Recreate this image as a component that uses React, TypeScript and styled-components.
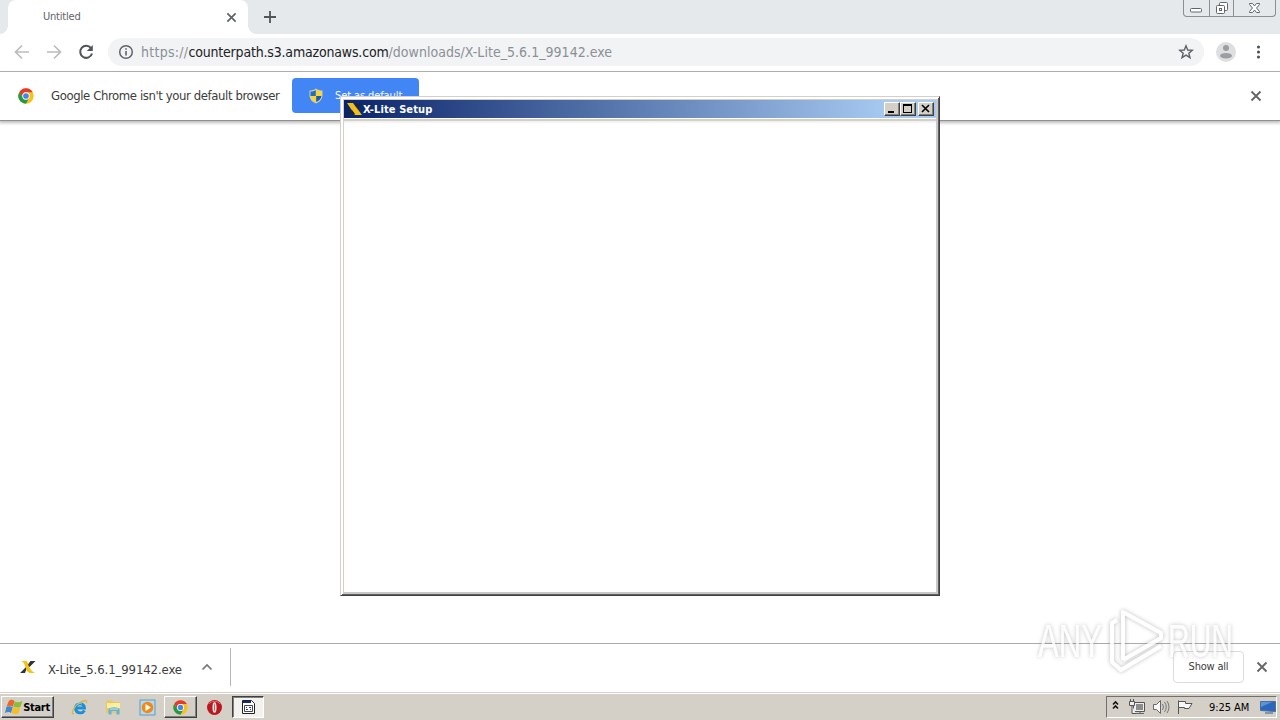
import React from "react";
import styled, { createGlobalStyle } from "styled-components";

const Global = createGlobalStyle`
  * { box-sizing: border-box; }
  body { margin: 0; overflow: hidden; background: #fff; }
  svg { display: block; flex: none; }
`;

const Desktop = styled.div`
  position: relative;
  width: 1280px;
  height: 720px;
  display: flex;
  flex-direction: column;
  overflow: hidden;
  background: #fff;
  font-family: "DejaVu Sans Condensed", "DejaVu Sans", sans-serif;
  font-stretch: condensed;
`;

const Text = styled.span<{ $size: number; $spacing?: number; $color?: string; $bold?: boolean }>`
  font-size: ${(p) => p.$size}px;
  letter-spacing: ${(p) => p.$spacing ?? 0}px;
  color: ${(p) => p.$color ?? "#3c3c3c"};
  font-weight: ${(p) => (p.$bold ? 700 : 400)};
  white-space: pre;
  line-height: 16px;
`;

const TabStrip = styled.header`
  flex: none;
  height: 34px;
  display: flex;
  padding-left: 8px;
  background: #e5e9ec;
`;

const Tab = styled.div`
  position: relative;
  width: 240px;
  height: 34px;
  display: flex;
  align-items: center;
  justify-content: space-between;
  padding: 0 11px 0 35px;
  border-radius: 8px 8px 0 0;
  background: #fff;
  &::before,
  &::after {
    content: "";
    position: absolute;
    bottom: 0;
    width: 8px;
    height: 8px;
  }
  &::before {
    left: -8px;
    background: radial-gradient(circle at 0 0, transparent 7.5px, #fff 8px);
  }
  &::after {
    right: -8px;
    background: radial-gradient(circle at 100% 0, transparent 7.5px, #fff 8px);
  }
`;

const NewTab = styled.div`
  padding: 11px 0 0 16px;
`;

const Caption = styled.div`
  margin: 0 4px 0 auto;
  display: flex;
  width: 93px;
  height: 17px;
  border: 1px solid #8b8f93;
  border-top: 0;
  border-radius: 0 0 4px 4px;
`;

const CaptionButton = styled.div<{ $w: number }>`
  width: ${(p) => p.$w}px;
  display: flex;
  justify-content: center;
  & + & { border-left: 1px solid #8b8f93; }
`;

const Toolbar = styled.div`
  flex: none;
  height: 38px;
  display: flex;
  align-items: center;
  padding: 0 14px 1px;
  border-bottom: 1px solid #a9abad;
`;

const Nav = styled.div`
  width: 94px;
  flex: none;
  display: flex;
  gap: 16px;
`;

const Address = styled.div`
  width: 1096px;
  flex: none;
  height: 28px;
  display: flex;
  align-items: center;
  padding: 0 10px;
  border-radius: 14px;
  background: #f1f3f4;
  svg:last-child { margin-left: auto; }
`;

const Url = styled.div`
  display: flex;
  margin-left: 7px;
`;

const ToolbarEnd = styled.div`
  display: flex;
  align-items: center;
  gap: 14px;
  margin-left: 11px;
`;

const InfoBar = styled.div`
  flex: none;
  height: 48px;
  display: flex;
  align-items: center;
  padding: 0 18px 0 18px;
  position: relative;
  box-shadow: 0 1px 0 #909090, 0 2px 3px 1px #bdbdbd;
  svg:last-child { margin-left: auto; }
`;

const InfoMessage = styled.div`
  width: 241px;
  margin-left: 17px;
  padding-bottom: 3px;
`;

const DefaultButton = styled.div`
  width: 127px;
  height: 35px;
  margin-bottom: 1px;
  display: flex;
  align-items: center;
  gap: 11px;
  padding-left: 16px;
  border-radius: 4px;
  background: #4285f4;
`;

const Page = styled.main`
  flex: 1;
`;

const Shelf = styled.footer`
  flex: none;
  height: 49px;
  display: flex;
  align-items: center;
  padding: 0 12px 2px 0;
  border-top: 1px solid #a9abad;
`;

const Download = styled.div`
  width: 231px;
  height: 38px;
  display: flex;
  align-items: center;
  padding-left: 20px;
  border-right: 1px solid #b4b6b8;
`;

const DownloadName = styled.div`
  width: 153px;
  padding-top: 3px;
  margin-left: 12px;
`;

const ShowAll = styled.div`
  width: 71px;
  height: 32px;
  margin: 0 12px 0 auto;
  display: flex;
  align-items: center;
  justify-content: center;
  border: 1px solid #dadce0;
  border-radius: 4px;
`;

const Taskbar = styled.div`
  flex: none;
  height: 28px;
  display: flex;
  align-items: flex-start;
  padding: 3px 3px 0 1px;
  background: #d4d0c8;
  border-top: 1px solid #d4d0c8;
  box-shadow: inset 0 1px 0 #fff;
`;

const TaskButton = styled.div<{ $w: number; $state?: "raised" | "pressed" }>`
  width: ${(p) => p.$w}px;
  height: 22px;
  display: flex;
  align-items: center;
  justify-content: center;
  gap: 0;
  border: 1px solid transparent;
  ${(p) =>
    p.$state === "raised" &&
    "border-color: #fff #404040 #404040 #fff; box-shadow: inset -1px -1px 0 #808080;"}
  ${(p) =>
    p.$state === "pressed" &&
    "border-color: #404040 #fff #fff #404040; background: #f3f2ef; box-shadow: inset 1px 1px 0 #808080;"}
`;

const StartLabel = styled.div`
  line-height: 16px;
`;

const Tray = styled.div`
  width: 171px;
  height: 22px;
  margin-left: auto;
  display: flex;
  align-items: center;
  padding-left: 5px;
  border: 1px solid;
  border-color: #707070 #fff #fff #707070;
`;

const Clock = styled.div`
  width: 51px;
  margin-left: 15px;
  padding-bottom: 2px;
`;

const SetupWindow = styled.section`
  position: absolute;
  left: 340px;
  top: 96px;
  width: 600px;
  height: 500px;
  display: flex;
  flex-direction: column;
  padding: 2px 1px 1px 2px;
  background: #fff;
  border: 1px solid;
  border-color: #d4d0c8 #404040 #404040 #d4d0c8;
  box-shadow: inset 1px 1px 0 #fff, inset -1px -1px 0 #606060;
`;

const Frame = styled.div`
  flex: 1;
  display: flex;
  flex-direction: column;
  border: 1px solid #d4d0c8;
  border-width: 1px 2px 2px 1px;
  border-right-color: #c9c8c6;
  border-bottom-color: #c9c8c6;
`;

const TitleBar = styled.div`
  height: 18px;
  flex: none;
  display: flex;
  align-items: center;
  padding: 0 2px 0 2px;
  background: linear-gradient(90deg, #0a246a, #a6caf0 92%);
`;

const ClientArea = styled.div`
  flex: 1;
  margin-top: 1px;
  border-top: 2px solid #d4d0c8;
  background: linear-gradient(#ededed, #fff 3px);
`;

const TitleText = styled.div`
  padding-bottom: 3px;
`;

const WindowButtons = styled.div`
  display: flex;
  margin-left: auto;
`;

const WindowButton = styled.div<{ $gap?: number }>`
  width: 16px;
  height: 14px;
  margin-left: ${(p) => p.$gap ?? 0}px;
  border: 1px solid;
  border-color: #fff #404040 #404040 #fff;
  box-shadow: inset -1px -1px 0 #808080;
  background: #d4d0c8;
`;

const Watermark = styled.div`
  position: absolute;
  left: 1030px;
  top: 600px;
  opacity: 0.85;
`;

const Cross = ({ size = 16, color = "#5f6368", r = 4 }: { size?: number; color?: string; r?: number }) => (
  <svg width={size} height={size} viewBox="-8 -8 16 16">
    <path d={`M-${r} -${r}L${r} ${r}M${r} -${r}L-${r} ${r}`} stroke={color} strokeWidth="2.5" />
  </svg>
);

const ChromeLogo = ({ size = 17 }: { size?: number }) => (
  <svg width={size} height={size} viewBox="0 0 48 48">
    <circle cx="24" cy="24" r="23" fill="#fbc116" />
    <path d="M4 12.5A23 23 0 0 1 44 13H24A11 11 0 0 0 14.5 29.5Z" fill="#e33b2e" />
    <path d="M4 12.5A23 23 0 0 0 24 47L33.5 29.5A11 11 0 0 1 14.5 29.5Z" fill="#229a4a" />
    <circle cx="24" cy="24" r="11" fill="#fff" />
    <circle cx="24" cy="24" r="8.5" fill="#4285f4" />
  </svg>
);

const Shield = () => (
  <svg width="16" height="16" viewBox="0 0 16 16">
    <path d="M8 .5C6 2 3.800 2.500 1.500 2.500V7C1.500 11 4 14 8 15.500C12 14 14.500 11 14.500 7V2.500C12 2.500 10 2 8 .5Z" fill="#d9cf9a" />
    <path d="M7.800 2V8H2.500V3.500C4.500 3.500 6 3 7.800 2Z" fill="#1f6fc4" />
    <path d="M8.200 2V8H13.500V3.500C11.500 3.500 10 3 8.200 2Z" fill="#ffd52d" />
    <path d="M7.800 8V14C4.500 12.500 3 10.500 2.500 8Z" fill="#ffd52d" />
    <path d="M8.200 8V14C11.500 12.500 13 10.500 13.500 8Z" fill="#1a5cae" />
  </svg>
);

const XMark = () => (
  <svg width="16" height="16" viewBox="0 0 16 16">
    <path d="M10.500 2H15.500L10 7.500L6.500 10L5 14H0L6 8Z" fill="#30343a" />
    <path d="M1 2H6.500C8 3 8 5.500 9 7.500C10.500 11 12 12.500 15 14H10C6.500 13 6.500 10 5 7C4 4 3.500 3 1 2Z" fill="#f5c211" />
  </svg>
);

const StartFlag = () => (
  <svg width="18" height="18" viewBox="0 0 17 17">
    <path d="M3.500 3C5.500 1 7.500 1.500 9 3L7.500 8C5.500 7 4 7 1.500 8Z" fill="#e9652b" />
    <path d="M9.300 3.300C11.500 4.500 13.500 4 16.500 2.500L14.700 8.200C12.500 9.500 10.500 9 7.800 8.200Z" fill="#8bbd3b" />
    <path d="M1.400 8.300C3.500 7.500 5 7.500 7.300 8.500L5.700 14.200C4 13 2.500 13 0 14.200Z" fill="#3f87d0" />
    <path d="M7.700 8.500C10 10 12 10 14.500 8.800L12.900 14.300C10.500 15.700 8.500 15.500 6.100 14.200Z" fill="#f7bd24" />
  </svg>
);

const Explorer = () => (
  <svg width="17" height="17" viewBox="0 0 17 17">
    <path d="M13.500 11.500C11 15.500 4.500 14.200 4.500 9.200C4.500 3.500 13.500 3.300 13.500 9H5" fill="none" stroke="#1c8fd8" strokeWidth="2.900" />
    <path d="M3 15C-1 15 3 7 9 3.500C13 1 16.500 .5 15.500 4" fill="none" stroke="#dfb73c" strokeWidth="1.300" />
    <path d="M5 7C6.500 4.500 9 4 11 5" fill="none" stroke="#75cdf3" strokeWidth="1" />
  </svg>
);

const Folder = () => (
  <svg width="17" height="17" viewBox="0 0 17 17">
    <path d="M1 3L3 1.500H7L8 3H15V14H1Z" fill="#ecc75a" />
    <path d="M2 4H15V9H2Z" fill="#fbeea0" />
    <path d="M3.500 15.500V10.500C5 7.500 13 7.500 14.500 10.500V15.500H11.500V12H6.500V15.500Z" fill="#67b2da" />
    <path d="M5 10H13" stroke="#b9e4f5" />
  </svg>
);

const MediaPlayer = () => (
  <svg width="17" height="17" viewBox="0 0 17 17">
    <rect x="1" y="1" width="15" height="15" fill="#b6d8ec" stroke="#5b9dca" />
    <circle cx="8.500" cy="8.500" r="5.800" fill="#f38914" />
    <path d="M6.500 5L12 8.500L6.500 12Z" fill="#fff" />
  </svg>
);

const Opera = () => (
  <svg width="17" height="17" viewBox="0 0 17 17">
    <circle cx="8.500" cy="8.500" r="7.500" fill="#b91820" />
    <path d="M3 5C5 1.500 12 1.500 14 5" stroke="#e06a6d" fill="none" />
    <ellipse cx="8.500" cy="8.500" rx="2" ry="5.300" fill="#f5e6e4" />
    <ellipse cx="8.500" cy="8.500" rx=".5" ry="4" fill="#b96766" />
  </svg>
);

const Installer = () => (
  <svg width="16" height="16" viewBox="0 0 16 16">
    <path d="M2.500 1.500H11.500L14.500 4.500V14.500H2.500Z" fill="#fff" stroke="#222" />
    <path d="M3 2H11V4H3Z" fill="#14277b" />
    <path d="M4.500 6.500H12.500V12.500H4.500Z" fill="#fff" stroke="#445" />
    <path d="M6 8H7V9H6ZM9 8H11V9H9ZM6 10H8V11H6ZM10 10H11V11H10Z" fill="#193d9c" />
  </svg>
);

const TrayIcons = () => (
  <svg width="82" height="20" viewBox="0 0 82 20" fill="none">
    <path d="M1 7.500L3.500 5L6 7.500M1 11.500L3.500 9L6 11.500" stroke="#111" strokeWidth="1.600" />
    <path d="M21.500 5.500H32.500V14.500H21.500Z" fill="#eee" stroke="#555" />
    <path d="M24 7H31V13H24Z" fill="#8c8c8c" />
    <path d="M24 16.500H32M28 14V17" stroke="#666" />
    <path d="M17.500 4.500H22.500V8.500H17.500ZM18.500 2V4M21.500 2V4M20 8.500V16.500H24" fill="#eee" stroke="#555" />
    <path d="M41.500 7.500H44.500L48.500 3.500V16.500L44.500 12.500H41.500Z" fill="#f8f8f8" stroke="#666" />
    <path d="M50.500 7Q52.500 10 50.500 13M52.500 5Q56 10 52.500 15M55 4Q59 10 55 16" stroke="#777" />
    <path d="M66.500 17V3.500M66.500 4.500H73.500V6.500H80L77 11.500H72.500V10.500H66.500Z" fill="#f6f6f6" stroke="#555" />
  </svg>
);

export default function App() {
  return (
    <>
      <Global />
      <Desktop>
        <TabStrip>
          <Tab>
            <Text $size={11} $spacing={-0.2} $color="#5f6368">Untitled</Text>
            <Cross size={11} r={6} />
          </Tab>
          <NewTab>
            <svg width="12" height="12" viewBox="0 0 12 12"><path d="M6 0V12M0 6H12" stroke="#50555a" strokeWidth="1.800" /></svg>
          </NewTab>
          <Caption>
            <CaptionButton $w={25}>
              <svg width="14" height="16" viewBox="0 0 14 16"><rect x="1.500" y="8.500" width="11" height="3.500" rx="1" fill="#fff" stroke="#62666a" /></svg>
            </CaptionButton>
            <CaptionButton $w={25}>
              <svg width="14" height="16" viewBox="0 0 14 16" fill="#fff" stroke="#62666a"><rect x="4.500" y="2.500" width="8" height="8" rx="1" /><rect x="1.500" y="5.500" width="8" height="8" rx="1" /><rect x="4.500" y="8.500" width="2" height="2" /></svg>
            </CaptionButton>
            <CaptionButton $w={42}>
              <svg width="14" height="16" viewBox="0 0 14 16"><path d="M1.500 3.500H4.500L6.500 6L8.500 3.500H11.500V4.500L8.500 8L11.500 11.500V12.500H8.500L6.500 10L4.500 12.500H1.500V11.500L4.500 8L1.500 4.500Z" fill="#fff" stroke="#62666a" /></svg>
            </CaptionButton>
          </Caption>
        </TabStrip>

        <Toolbar>
          <Nav>
            <svg width="16" height="16" viewBox="0 0 16 16"><path d="M15 8H2M8 1.500L1.500 8L8 14.500" fill="none" stroke="#babcbe" strokeWidth="1.700" /></svg>
            <svg width="16" height="16" viewBox="0 0 16 16"><path d="M1 8H14M8 1.500L14.500 8L8 14.500" fill="none" stroke="#babcbe" strokeWidth="1.700" /></svg>
            <svg width="16" height="16" viewBox="0 0 16 16"><path d="M13 4.200A6 6 0 1 0 14 9.500" fill="none" stroke="#50555a" strokeWidth="2" /><path d="M14.800 1V7H8.800Z" fill="#50555a" /></svg>
          </Nav>
          <Address>
            <svg width="16" height="16" viewBox="0 0 16 16"><circle cx="8" cy="8" r="6.300" fill="none" stroke="#5f6368" strokeWidth="1.500" /><path d="M8 7V11.500M8 4.200V5.800" stroke="#5f6368" strokeWidth="1.600" /></svg>
            <Url>
              <Text $size={14} $spacing={0.28} $color="#8b9095">https://</Text>
              <Text $size={14} $spacing={-0.18} $color="#202124">counterpath.s3.amazonaws.com</Text>
              <Text $size={14} $spacing={0.03} $color="#8b9095">/downloads/X-Lite_5.6.1_99142.exe</Text>
            </Url>
            <svg width="16" height="16" viewBox="0 0 16 16"><path d="M8 1.800L9.700 6L14.300 6.300L10.800 9.200L12 13.700L8 11.200L4 13.700L5.200 9.200L1.700 6.300L6.300 6Z" fill="none" stroke="#5f6368" strokeWidth="1.400" /></svg>
          </Address>
          <ToolbarEnd>
            <svg width="22" height="22" viewBox="0 0 22 22"><circle cx="11" cy="11" r="10" fill="#dddfe1" /><circle cx="11" cy="7" r="3" fill="#9b9da0" /><ellipse cx="11" cy="14.800" rx="6" ry="2.800" fill="#9b9da0" /></svg>
            <svg width="16" height="16" viewBox="0 0 16 16" fill="#50555a"><circle cx="7.500" cy="3" r="1.600" /><circle cx="7.500" cy="8" r="1.600" /><circle cx="7.500" cy="13" r="1.600" /></svg>
          </ToolbarEnd>
        </Toolbar>

        <InfoBar>
          <ChromeLogo size={16} />
          <InfoMessage><Text $size={13} $spacing={-0.4}>Google Chrome isn't your default browser</Text></InfoMessage>
          <DefaultButton>
            <Shield />
            <Text $size={11} $spacing={-0.1} $color="#fff">Set as default</Text>
          </DefaultButton>
          <Cross size={12} color="#666" r={6} />
        </InfoBar>

        <Page />

        <Shelf>
          <Download>
            <XMark />
            <DownloadName><Text $size={13} $spacing={-0.1}>X-Lite_5.6.1_99142.exe</Text></DownloadName>
            <svg width="12" height="12" viewBox="0 0 12 12"><path d="M1.500 8.500L6 4L10.500 8.500" stroke="#777" strokeWidth="1.700" fill="none" /></svg>
          </Download>
          <ShowAll><Text $size={11} $spacing={-0.2}>Show all</Text></ShowAll>
          <Cross size={12} color="#666" r={6} />
        </Shelf>

        <Taskbar>
          <TaskButton $w={53} $state="raised">
            <StartFlag />
            <StartLabel><Text $size={11} $spacing={-0.3} $color="#000" $bold>Start</Text></StartLabel>
          </TaskButton>
          <TaskButton $w={10} />
          <TaskButton $w={31}><Explorer /></TaskButton>
          <TaskButton $w={36}><Folder /></TaskButton>
          <TaskButton $w={33}><MediaPlayer /></TaskButton>
          <TaskButton $w={33} $state="raised"><ChromeLogo size={15} /></TaskButton>
          <TaskButton $w={35}><Opera /></TaskButton>
          <TaskButton $w={32} $state="pressed"><Installer /></TaskButton>
          <Tray>
            <TrayIcons />
            <Clock><Text $size={11} $spacing={-0.05} $color="#000">9:25 AM</Text></Clock>
            <svg width="16" height="16" viewBox="0 0 16 16"><path d="M.500 2.500H15.500V12.500L.500 11.500Z" fill="#2c67bb" stroke="#4c6f9a" /><path d="M1 3H12L1 8Z" fill="#5b94dc" /><path d="M5 14H13" stroke="#385c8b" /></svg>
          </Tray>
        </Taskbar>

        <SetupWindow>
          <Frame>
            <TitleBar>
              <svg width="17" height="16" viewBox="0 0 17 16"><path d="M1 2H7L16 14H9Z" fill="#f2bf16" /><path d="M10 3H15L11.500 7L9 4.500ZM6 9L9 13H2Z" fill="#20242f" /></svg>
              <TitleText><Text $size={11} $spacing={0.1} $color="#fff" $bold>X-Lite Setup</Text></TitleText>
              <WindowButtons>
                <WindowButton><svg width="14" height="12" viewBox="0 0 14 12"><path d="M3 8H9V10H3Z" /></svg></WindowButton>
                <WindowButton><svg width="14" height="12" viewBox="0 0 14 12" shapeRendering="crispEdges"><path d="M2 1H11V10H2ZM3 3V9H10V3Z" fillRule="evenodd" /></svg></WindowButton>
                <WindowButton $gap={2}><svg width="14" height="12" viewBox="0 0 14 12"><path d="M3 2L10 9M10 2L3 9" stroke="#000" strokeWidth="1.600" /></svg></WindowButton>
              </WindowButtons>
            </TitleBar>
            <ClientArea />
          </Frame>
        </SetupWindow>

        <Watermark>
          <svg width="214" height="80" viewBox="0 0 214 80">
            <defs>
              <filter id="halo" x="-10%" y="-20%" width="120%" height="140%">
                <feDropShadow dx="0" dy="0" stdDeviation="2" floodColor="#777" floodOpacity=".6" />
              </filter>
            </defs>
            <g filter="url(#halo)" fill="#fff" fillOpacity=".9" fontFamily="Liberation Sans, sans-serif" fontSize="46">
              <text x="8" y="57" textLength="64" lengthAdjust="spacingAndGlyphs">ANY</text>
              <text x="138" y="57" textLength="65" lengthAdjust="spacingAndGlyphs">RUN</text>
              <path d="M87 20L82 23V62L91 70L131 46M93 60V12L131 33V38L93 60" fill="none" stroke="#fff" strokeWidth="4" strokeLinejoin="round" />
            </g>
          </svg>
        </Watermark>
      </Desktop>
    </>
  );
}
